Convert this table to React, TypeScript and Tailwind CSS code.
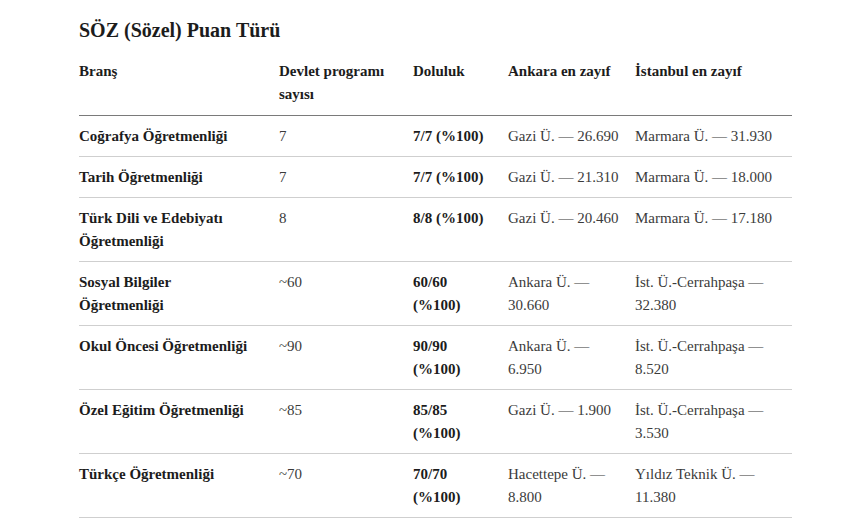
const rows = [
  { b: "Coğrafya Öğretmenliği", n: "7", d: "7/7 (%100)", a: "Gazi Ü. — 26.690", i: "Marmara Ü. — 31.930" },
  { b: "Tarih Öğretmenliği", n: "7", d: "7/7 (%100)", a: "Gazi Ü. — 21.310", i: "Marmara Ü. — 18.000" },
  { b: "Türk Dili ve Edebiyatı Öğretmenliği", n: "8", d: "8/8 (%100)", a: "Gazi Ü. — 20.460", i: "Marmara Ü. — 17.180" },
  { b: "Sosyal Bilgiler Öğretmenliği", n: "~60", d: "60/60 (%100)", a: "Ankara Ü. — 30.660", i: "İst. Ü.-Cerrahpaşa — 32.380" },
  { b: "Okul Öncesi Öğretmenliği", n: "~90", d: "90/90 (%100)", a: "Ankara Ü. — 6.950", i: "İst. Ü.-Cerrahpaşa — 8.520" },
  { b: "Özel Eğitim Öğretmenliği", n: "~85", d: "85/85 (%100)", a: "Gazi Ü. — 1.900", i: "İst. Ü.-Cerrahpaşa — 3.530" },
  { b: "Türkçe Öğretmenliği", n: "~70", d: "70/70 (%100)", a: "Hacettepe Ü. — 8.800", i: "Yıldız Teknik Ü. — 11.380" },
];

export default function App() {
  return (
    <div
      className="min-h-screen bg-white px-[79px] pt-[16px] text-[#1c1c1c]"
      style={{ fontFamily: '"Liberation Serif", "DejaVu Serif", serif' }}
    >
      <h2 className="text-[20px] font-bold leading-[28px] mb-[7px]">SÖZ (Sözel) Puan Türü</h2>
      <table className="w-[713px] table-fixed border-collapse text-[15px] leading-[23px]">
        <colgroup>
          <col className="w-[200px]" />
          <col className="w-[134px]" />
          <col className="w-[95px]" />
          <col className="w-[127px]" />
          <col className="w-[157px]" />
        </colgroup>
        <thead>
          <tr className="border-b border-[#7a7a7a] text-left align-top">
            <th className="font-bold pr-6 py-[9px]">Branş</th>
            <th className="font-bold pr-4 py-[9px]">Devlet programı sayısı</th>
            <th className="font-bold pr-4 py-[9px]">Doluluk</th>
            <th className="font-bold pr-4 py-[9px]">Ankara en zayıf</th>
            <th className="font-bold pr-4 py-[9px]">İstanbul en zayıf</th>
          </tr>
        </thead>
        <tbody>
          {rows.map((r, idx) => (
            <tr key={idx} className="border-b border-[#cfcfcf] align-top">
              <td className="font-bold pr-6 pt-[9px] pb-[8px]">{r.b}</td>
              <td className="pr-4 pt-[9px] pb-[8px] text-[#3b3b3b]">{r.n}</td>
              <td className="font-bold pr-4 pt-[9px] pb-[8px]">{r.d}</td>
              <td className="pr-4 pt-[9px] pb-[8px] text-[#3b3b3b]">{r.a}</td>
              <td className="pr-4 pt-[9px] pb-[8px] text-[#3b3b3b]">{r.i}</td>
            </tr>
          ))}
        </tbody>
      </table>
    </div>
  );
}
